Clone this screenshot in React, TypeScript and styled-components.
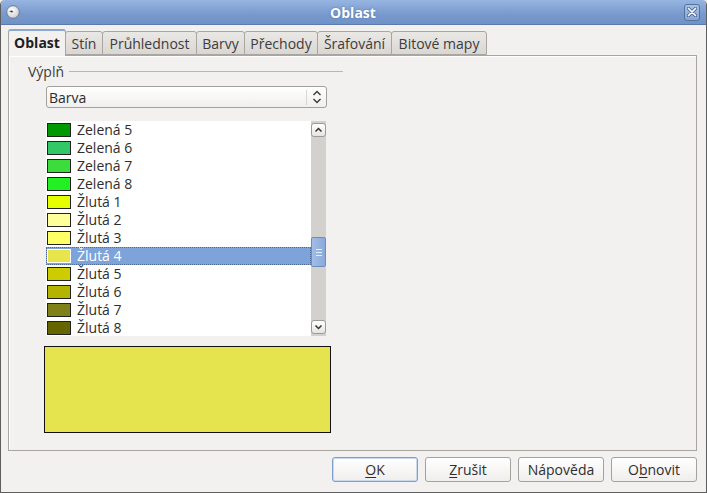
import React from 'react';
import styled, { createGlobalStyle } from 'styled-components';

const GlobalStyle = createGlobalStyle`
  html, body {
    margin: 0;
    padding: 0;
    background: #f2f1f0;
    overflow: hidden;
  }
  body {
    font-family: 'Open Sans', 'Noto Sans', 'DejaVu Sans', sans-serif;
    font-size: 14px;
    color: #3c3c3c;
  }
`;

type Colour = { name: string; color: string };

const colours: Colour[] = [
  { name: 'Zelená 5', color: '#009a00' },
  { name: 'Zelená 6', color: '#33c866' },
  { name: 'Zelená 7', color: '#3cdc3c' },
  { name: 'Zelená 8', color: '#22f022' },
  { name: 'Žlutá 1', color: '#e6ff00' },
  { name: 'Žlutá 2', color: '#ffff99' },
  { name: 'Žlutá 3', color: '#ffff66' },
  { name: 'Žlutá 4', color: '#e6e64c' },
  { name: 'Žlutá 5', color: '#cccc00' },
  { name: 'Žlutá 6', color: '#b3b300' },
  { name: 'Žlutá 7', color: '#808019' },
  { name: 'Žlutá 8', color: '#666600' },
];

// tab label + width in px, as they sit in the strip
const tabs: [string, number][] = [
  ['Oblast', 58],
  ['Stín', 38],
  ['Průhlednost', 95],
  ['Barvy', 49],
  ['Přechody', 74],
  ['Šrafování', 75],
  ['Bitové mapy', 96],
];

const App = () => {
  return (
    <>
      <GlobalStyle />
      <Window>
        <TitleBar>
          <AppIcon width="14" height="14" viewBox="0 0 14 14">
            <defs>
              <radialGradient id="ball" cx="40%" cy="35%" r="70%">
                <stop offset="0" stopColor="#ffffff" />
                <stop offset="1" stopColor="#c9ccd2" />
              </radialGradient>
            </defs>
            <circle cx="7" cy="7" r="6.3" fill="url(#ball)" stroke="#5d6b80" strokeWidth="0.8" />
            <path d="M3 6.2 L5.6 5.4 L7.6 6.4 L5.4 6.9 Z" fill="#2c2c2c" />
            <path d="M5.8 6.6 L6.6 8 L5.2 7.2 Z" fill="#2c2c2c" />
          </AppIcon>
          <Title>Oblast</Title>
          <CloseButton>
            <svg width="10" height="10" viewBox="0 0 10 10">
              <path
                d="M1.5 1.5 L8.5 8.5 M8.5 1.5 L1.5 8.5"
                stroke="#4a6690"
                strokeWidth="3.2"
                strokeLinecap="round"
              />
              <path
                d="M1.5 1.5 L8.5 8.5 M8.5 1.5 L1.5 8.5"
                stroke="#ffffff"
                strokeWidth="1.7"
                strokeLinecap="round"
              />
            </svg>
          </CloseButton>
        </TitleBar>

        <Body>
          <TabStrip>
            {tabs.map(([t, w], i) => (
              <Tab key={t} $active={i === 0} $width={w}>
                {t}
              </Tab>
            ))}
          </TabStrip>

          <TabPanel>
            <Section>
              <SectionHeader>
                <SectionLabel>Výplň</SectionLabel>
                <SectionRule />
              </SectionHeader>

              <SectionBody>
                <Select>
                  <SelectText>Barva</SelectText>
                  <SelectArrow>
                    <svg width="10" height="14" viewBox="0 0 10 14">
                      <path
                        d="M1.5 5 L5 1.6 L8.5 5 M1.5 9 L5 12.4 L8.5 9"
                        fill="none"
                        stroke="#3a3a3a"
                        strokeWidth="1.4"
                      />
                    </svg>
                  </SelectArrow>
                </Select>

                <ListBox>
                  <Rows>
                    {colours.map((c, i) => (
                      <Row key={c.name} $selected={i === 7}>
                        <Swatch $selected={i === 7} style={{ background: c.color }} />
                        <RowText>{c.name}</RowText>
                      </Row>
                    ))}
                  </Rows>
                  <ScrollBar>
                    <ScrollButton>
                      <svg width="9" height="6" viewBox="0 0 9 6">
                        <path d="M1.5 4.5 L4.5 1.5 L7.5 4.5" fill="none" stroke="#333" strokeWidth="1.5" />
                      </svg>
                    </ScrollButton>
                    <Trough>
                      <Thumb>
                        <Grip />
                        <Grip />
                        <Grip />
                      </Thumb>
                    </Trough>
                    <ScrollButton>
                      <svg width="9" height="6" viewBox="0 0 9 6">
                        <path d="M1.5 1.5 L4.5 4.5 L7.5 1.5" fill="none" stroke="#333" strokeWidth="1.5" />
                      </svg>
                    </ScrollButton>
                  </ScrollBar>
                </ListBox>

                <Preview />
              </SectionBody>
            </Section>
          </TabPanel>

          <ButtonRow>
            <Button $focused>
              <u>O</u>K
            </Button>
            <Button>
              <u>Z</u>rušit
            </Button>
            <Button>Nápověda</Button>
            <Button>
              O<u>b</u>novit
            </Button>
          </ButtonRow>
        </Body>
      </Window>
    </>
  );
};

const Window = styled.div`
  width: 707px;
  height: 493px;
  box-sizing: border-box;
  display: flex;
  flex-direction: column;
  background: #f2f1f0;
  border: 1px solid #5e5e5e;
  border-top: none;
  border-radius: 5px 5px 0 0;
  overflow: hidden;
`;

const TitleBar = styled.div`
  height: 25px;
  flex: none;
  display: flex;
  align-items: center;
  padding: 0 5px 0 5px;
  box-sizing: border-box;
  background: linear-gradient(#97b5e1, #7899cd 60%, #6f92c7);
  border-bottom: 1px solid #5b7bae;
`;

const AppIcon = styled.svg`
  flex: none;
  margin-top: -1px;
`;

const Title = styled.div`
  flex: 1;
  text-align: center;
  color: #ffffff;
  font-weight: 700;
  font-size: 14px;
  text-shadow: 0 0 2px #4f6f9f;
  margin-left: 2px;
`;

const CloseButton = styled.div`
  width: 16px;
  height: 17px;
  box-sizing: border-box;
  margin-right: 1px;
  border: 1px solid #55729f;
  border-radius: 3px;
  background: linear-gradient(#a9c2e6, #87a6d6);
  display: flex;
  align-items: center;
  justify-content: center;
`;

const Body = styled.div`
  flex: 1;
  display: flex;
  flex-direction: column;
  padding: 4px 9px 10px 7px;
  min-height: 0;
`;

const TabStrip = styled.div`
  height: 26px;
  flex: none;
  display: flex;
  align-items: flex-end;
  position: relative;
  z-index: 1;
`;

const Tab = styled.div<{ $active?: boolean; $width: number }>`
  box-sizing: border-box;
  width: ${(p) => p.$width}px;
  height: ${(p) => (p.$active ? '27px' : '24px')};
  margin-bottom: ${(p) => (p.$active ? '-1px' : '0')};
  display: flex;
  align-items: center;
  justify-content: center;
  white-space: nowrap;
  padding-bottom: ${(p) => (p.$active ? '2px' : '0')};
  font-weight: ${(p) => (p.$active ? 700 : 400)};
  color: ${(p) => (p.$active ? '#1e1e1e' : '#3c3c3c')};
  border: 1px solid #a9a6a1;
  border-bottom: ${(p) => (p.$active ? 'none' : '1px solid #a9a6a1')};
  border-top: ${(p) => (p.$active ? '2px solid #8ea7cc' : '1px solid #a9a6a1')};
  border-radius: 3px 3px 0 0;
  background: ${(p) =>
    p.$active ? '#f2f1f0' : 'linear-gradient(#eae8e5, #dad7d3)'};
  & + & {
    margin-left: -1px;
  }
`;

const TabPanel = styled.div`
  flex: 1;
  min-height: 0;
  box-sizing: border-box;
  border: 1px solid #a9a6a1;
  box-shadow: inset 1px 1px 0 #ffffff;
  background: #f2f1f0;
  padding: 6px 0 0 19px;
`;

const Section = styled.div`
  width: 315px;
  display: flex;
  flex-direction: column;
`;

const SectionHeader = styled.div`
  display: flex;
  align-items: center;
  height: 18px;
`;

const SectionLabel = styled.span`
  color: #3c3c3c;
  padding-right: 5px;
`;

const SectionRule = styled.div`
  flex: 1;
  height: 1px;
  background: #bab7b2;
  margin-top: 1px;
`;

const SectionBody = styled.div`
  display: flex;
  flex-direction: column;
  padding-left: 18px;
  margin-top: 6px;
`;

const Select = styled.div`
  width: 281px;
  height: 22px;
  box-sizing: border-box;
  display: flex;
  align-items: center;
  border: 1px solid #a3a09b;
  border-radius: 3px;
  background: linear-gradient(#ffffff, #f0efed);
`;

const SelectText = styled.span`
  flex: 1;
  padding-left: 2px;
  color: #2c2c2c;
`;

const SelectArrow = styled.div`
  width: 19px;
  height: 15px;
  display: flex;
  align-items: center;
  justify-content: center;
  border-left: 1px solid #d8d6d3;
`;

const ListBox = styled.div`
  width: 280px;
  height: 215px;
  margin-top: 13px;
  display: flex;
  background: #ffffff;
  overflow: hidden;
`;

const Rows = styled.div`
  flex: 1;
  display: flex;
  flex-direction: column;
`;

const Row = styled.div<{ $selected?: boolean }>`
  height: 18px;
  flex: none;
  box-sizing: border-box;
  display: flex;
  align-items: center;
  padding-left: 1px;
  background: ${(p) => (p.$selected ? '#7ea3d8' : 'transparent')};
  outline: ${(p) => (p.$selected ? '1px dotted #4e6d9c' : 'none')};
  outline-offset: -1px;
  color: ${(p) => (p.$selected ? '#ffffff' : '#2e2e2e')};
`;

const Swatch = styled.div<{ $selected?: boolean }>`
  width: 24px;
  height: 14px;
  box-sizing: border-box;
  border: 1px solid ${(p) => (p.$selected ? '#ffffff' : '#222222')};
  flex: none;
`;

const RowText = styled.span`
  margin-left: 6px;
  line-height: 18px;
`;

const ScrollBar = styled.div`
  width: 15px;
  flex: none;
  display: flex;
  flex-direction: column;
  background: #d3d1ce;
`;

const ScrollButton = styled.div`
  height: 14px;
  flex: none;
  box-sizing: border-box;
  margin: 2px 0;
  display: flex;
  align-items: center;
  justify-content: center;
  border: 1px solid #9e9b96;
  border-radius: 3px;
  background: linear-gradient(#ffffff, #e6e4e1);
`;

const Trough = styled.div`
  flex: 1;
  padding-top: 98px;
`;

const Thumb = styled.div`
  height: 30px;
  box-sizing: border-box;
  border: 1px solid #6c8cbd;
  border-radius: 2px;
  background: linear-gradient(90deg, #a3bee5, #8aaadb);
  display: flex;
  flex-direction: column;
  align-items: center;
  justify-content: center;
  gap: 2px;
`;

const Grip = styled.div`
  width: 6px;
  height: 1px;
  background: #e8effa;
`;

const Preview = styled.div`
  width: 287px;
  height: 87px;
  box-sizing: border-box;
  margin: 10px 0 0 -2px;
  background: #e6e44e;
  border: 1px solid #111111;
`;

const ButtonRow = styled.div`
  flex: none;
  display: flex;
  justify-content: flex-end;
  gap: 7px;
  margin-top: 6px;
`;

const Button = styled.div<{ $focused?: boolean }>`
  width: 86px;
  height: 25px;
  box-sizing: border-box;
  display: flex;
  align-items: center;
  justify-content: center;
  border: 1px solid ${(p) => (p.$focused ? '#7c9fd0' : '#a5a29d')};
  border-radius: 3px;
  background: linear-gradient(#ffffff, #efeeec);
  box-shadow: ${(p) => (p.$focused ? 'inset 0 0 0 1px #c9d8ee' : 'none')};
  color: #2e2e2e;
  u {
    text-underline-offset: 2px;
  }
`;

export default App;
